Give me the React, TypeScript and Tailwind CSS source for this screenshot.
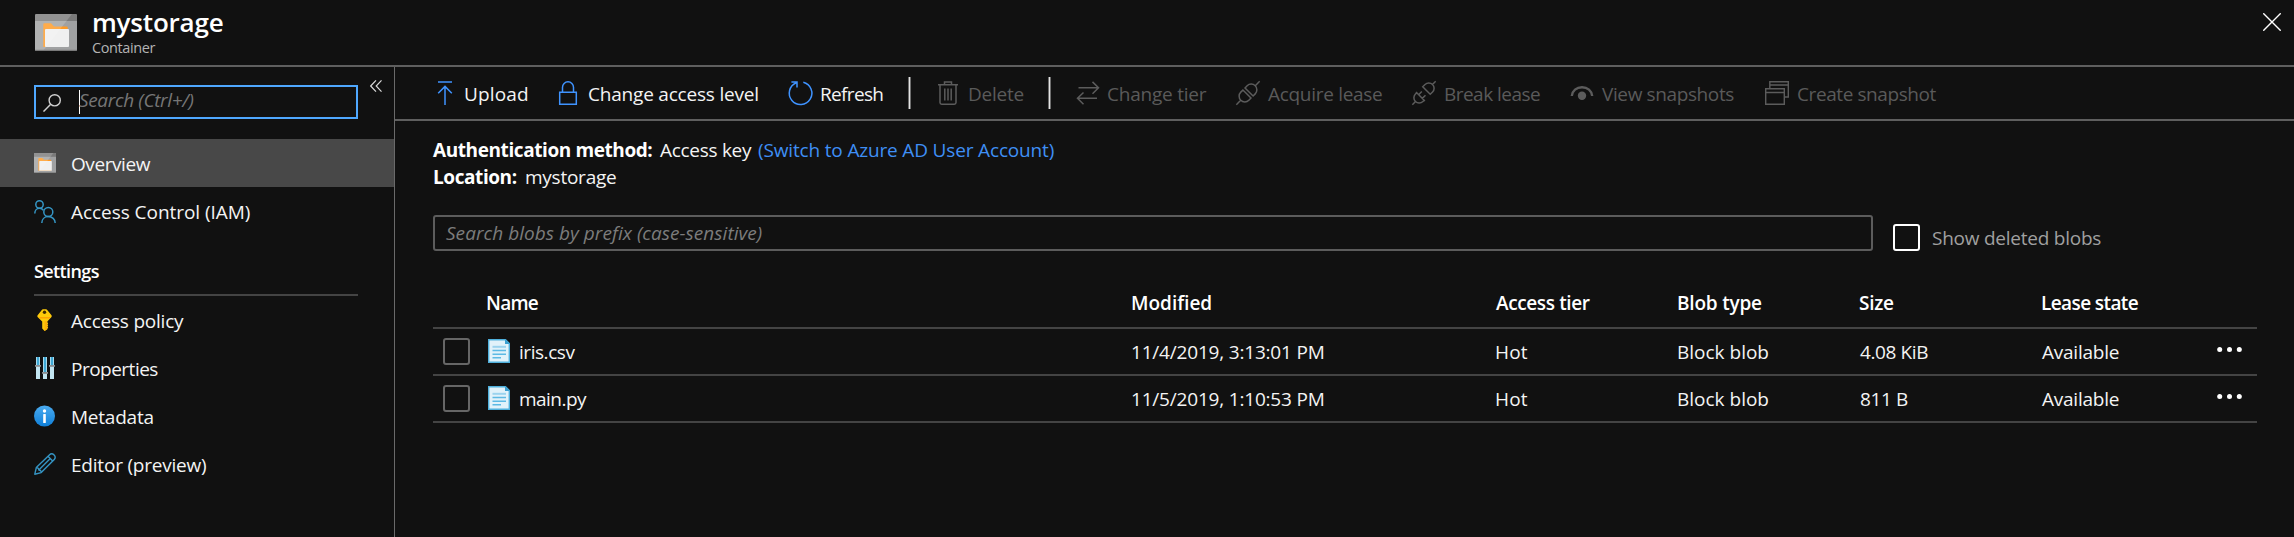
import React, { ReactNode } from 'react';

function ContainerIcon({ className, id }: { className: string; id: string }) {
  return (
    <svg className={className} viewBox="0 0 42 37" preserveAspectRatio="none">
      <defs>
        <clipPath id={id}>
          <rect width="42" height="37" rx="1.5" />
        </clipPath>
      </defs>
      <g clipPath={`url(#${id})`}>
        <rect width="42" height="37" fill="#a0a1a2" />
        <rect width="42" height="7" fill="#7a7a7a" />
        <path d="M8.3 33V10.5c0-.8.5-1.2 1.200-1.200H16l3 3.200H31.500c.8 0 1.200.4 1.200 1.200V33z" fill="#ff9a24" />
        <rect x="10" y="15" width="24" height="18" rx="1" fill="#f0f0f0" />
        <path d="M0 0H37L8 37H0z" fill="#fff" opacity=".18" />
        <rect x="0" y="35.800" width="42" height="1.200" fill="#7a7a7a" />
      </g>
    </svg>
  );
}

function PeopleIcon() {
  return (
    <svg className="h-[23px] w-[22px]" viewBox="0 0 22 23" fill="none" stroke="#3595c4" strokeWidth="1.500">
      <circle cx="5.500" cy="4.500" r="3.700" />
      <path d="M.8 13.500c0-3 2-5.200 4.700-5.200 1.700 0 3 .7 3.900 1.900" />
      <circle cx="14.300" cy="12" r="4.500" />
      <path d="M7.800 23c0-3.700 2.700-6.400 6.500-6.400s6.900 2.700 6.900 6.400" />
    </svg>
  );
}

function KeyIcon() {
  return (
    <svg className="h-[22px] w-[22px]" viewBox="0 0 22 22">
      <path
        d="M8.200.6C9 .1 12 .1 12.800.6l4.500 5.300c.6.700.600 1.600 0 2.300l-4 4.300v1.100l.9.900-.9 1 .9 1-.9 1 .9 1-.9 1v.8L10.600 22 8.200 19.600V12.500L3.800 8.200c-.6-.7-.6-1.600 0-2.300z"
        fill="#ffca0a"
      />
      <path d="M5.500 8.800h10.500" stroke="#ff9c00" strokeWidth="1.300" />
      <path d="M13.300 12.500v7.500L10.600 22V12z" fill="#fdb10a" />
      <circle cx="10.500" cy="3.300" r="1.700" fill="#3d2a00" />
    </svg>
  );
}

function PropertiesIcon() {
  return (
    <svg className="h-[22px] w-[22px]" viewBox="0 0 22 22">
      {[
        [2, 8],
        [9, 15],
        [16, 8],
      ].map(([x, h]) => (
        <g key={x}>
          <rect x={x} y="0" width="4" height="22" fill="#c3e6f2" />
          <rect x={x + 0.8} y="0" width="2.400" height={h} fill="#3fa9d6" />
          <rect x={x - 1} y={h} width="6" height="1.800" fill="#8a8d90" />
        </g>
      ))}
    </svg>
  );
}

function InfoIcon() {
  return (
    <svg className="h-[22px] w-[22px]" viewBox="0 0 22 22">
      <defs>
        <linearGradient id="info" x1="0" y1="0" x2="0" y2="1">
          <stop offset="0" stopColor="#4aabf0" />
          <stop offset="1" stopColor="#0f7fd8" />
        </linearGradient>
      </defs>
      <circle cx="10.500" cy="11" r="10.500" fill="url(#info)" />
      <circle cx="10.500" cy="6" r="1.700" fill="#fff" />
      <rect x="9.200" y="9" width="2.600" height="9" rx=".6" fill="#fff" />
    </svg>
  );
}

function PencilIcon() {
  return (
    <svg className="h-[22px] w-[22px]" viewBox="0 0 22 22" fill="none" stroke="#3595c4" strokeWidth="1.400" strokeLinejoin="round">
      <path d="M.8 21.200l1.500-6.600L15.600 1.700c1.200-1.200 3-1.200 4.200 0l.5.500c1.200 1.200 1.200 3 0 4.200L7.200 19.600z" />
      <path d="M2.300 14.600c1.600-.1 2.500.8 2.500 2.400 1.600 0 2.500 1 2.400 2.600M14 3.300l4.700 4.700M4.800 17L16.300 5.600" />
    </svg>
  );
}

const I = 'h-6 w-6 shrink-0 overflow-visible';

const icons: Record<string, ReactNode> = {
  upload: (
    <svg className={I} viewBox="0 0 24 24" fill="none" stroke="#3f93ff" strokeWidth="1.500">
      <path d="M5 .9h14M12 24V5.500M5.200 12.300L12 5.400l6.800 6.900" />
    </svg>
  ),
  lock: (
    <svg className={I} viewBox="0 0 24 24" fill="none" stroke="#3f93ff" strokeWidth="1.500">
      <path d="M3.700 11.200h16.600v12H3.700zM6.500 11V6.300a5.500 5.500 0 0 1 11 0V11" />
    </svg>
  ),
  refresh: (
    <svg className={I} viewBox="0 0 24 24" fill="none" stroke="#3f93ff" strokeWidth="1.500">
      <path d="M15.300 1.200A11.300 11.300 0 1 1 8.300 1.700M3.400.9H9v5.500" />
    </svg>
  ),
  trash: (
    <svg className={I} viewBox="0 0 24 24" fill="none" stroke="#5c5c5c" strokeWidth="1.500">
      <path d="M2 3.800h20M8.500 3.500V.9h7v2.600M4 4v17.500c0 1 .7 1.700 1.700 1.700h12.600c1 0 1.700-.7 1.700-1.700V4M8.800 7.500v12M12 7.500v12M15.200 7.500v12" />
    </svg>
  ),
  swap: (
    <svg className={I} viewBox="0 0 24 24" fill="none" stroke="#5c5c5c" strokeWidth="1.500">
      <path d="M2.500 6.800h20M16.500.9l6 5.900-6 5.900M21 17.300H1.500M7.500 11.500l-6 5.800 6 5.900" />
    </svg>
  ),
  plug: (
    <svg className={I} viewBox="0 0 24 24" fill="none" stroke="#5c5c5c" strokeWidth="1.500">
      <g transform="translate(12 12) rotate(-45)">
        <path d="M-16.500 0h6.500M10 0h6.500M-1.500-5.700h-3a5.700 5.700 0 0 0 0 11.400h3zM1.500-5.700h3a5.700 5.700 0 0 1 0 11.400h-3z" />
      </g>
    </svg>
  ),
  unplug: (
    <svg className={I} viewBox="0 0 24 24" fill="none" stroke="#5c5c5c" strokeWidth="1.500">
      <g transform="translate(12 12) rotate(-45)">
        <path d="M-16.500 0h4.500M12 0h4.500M-5-5.300h-1.800a5.300 5.300 0 0 0 0 10.600H-5M-5-6.300V6.300M-5-2.600h4.500M-5 2.600h4.500M3.500-5.300h3.300a5.300 5.300 0 0 1 0 10.600H3.500z" />
      </g>
    </svg>
  ),
  eye: (
    <svg className={I} viewBox="0 0 24 24" fill="none">
      <path d="M1.800 15C2.300 9.800 6.500 6.300 12 6.300s9.700 3.500 10.200 8.700" stroke="#5c5c5c" strokeWidth="2.400" />
      <circle cx="12" cy="14.800" r="4.200" fill="#5c5c5c" />
    </svg>
  ),
  windows: (
    <svg className={I} viewBox="0 0 24 24" fill="none" stroke="#5c5c5c" strokeWidth="1.400">
      <path d="M.7 7.700h18.600v15.600H.7zM.7 11.500h18.600M4.800 7V.7h18.500V16h-4M4.800 4h18.500" />
    </svg>
  ),
};

const commands = [
  { icon: 'upload', label: 'Upload', box: 'w-[123px]', text: 'ml-[7px] tracking-[0.15px]' },
  { icon: 'lock', label: 'Change access level', box: 'w-[232px]', text: 'ml-[8px] tracking-[-0.2px]' },
  { icon: 'refresh', label: 'Refresh', box: 'w-[120px]', text: 'ml-[8px] tracking-[-0.66px]' },
  { icon: '' },
  { icon: 'trash', label: 'Delete', box: 'w-[112px]', text: 'ml-[8px] tracking-[-0.26px]' },
  { icon: '' },
  { icon: 'swap', label: 'Change tier', box: 'w-[160px]', text: 'ml-[7px] tracking-[-0.22px]' },
  { icon: 'plug', label: 'Acquire lease', box: 'w-[176px]', text: 'ml-[8px] tracking-[-0.3px]' },
  { icon: 'unplug', label: 'Break lease', box: 'w-[158px]', text: 'ml-[8px] tracking-[-0.53px]' },
  { icon: 'eye', label: 'View snapshots', box: 'w-[195px]', text: 'ml-[8px] tracking-[-0.38px]' },
  { icon: 'windows', label: 'Create snapshot', box: 'w-[180px]', text: 'ml-[8px] tracking-[-0.41px]' },
];

function NavItem({ icon, label, tracking, active }: { icon: ReactNode; label: string; tracking: string; active?: boolean }) {
  return (
    <div className={`flex h-12 items-center pl-[34px] ${active ? 'bg-[#484848]' : ''}`}>
      <span className="w-[22px] shrink-0">{icon}</span>
      <span className={`ml-[15px] pt-[2px] leading-[26px] ${tracking}`}>{label}</span>
    </div>
  );
}

function FileIcon() {
  return (
    <svg className="h-6 w-[22px] shrink-0" viewBox="0 0 22 24">
      <path d="M.7.700H17.500L21.300 4.500V23.300H.7z" fill="#e1f2fa" stroke="#4fb0dc" strokeWidth="1.400" />
      <path d="M17 0l5 5h-5z" fill="#3b9fd0" />
      <path d="M4.500 7.800h13.500" stroke="#9bd3ee" strokeWidth="2" />
      <path d="M4.500 11.500h13.500M4.500 15.300h13.500M4.500 18.700h8.500" stroke="#5cb9e4" strokeWidth="1.400" />
    </svg>
  );
}

const COLS = 'grid grid-cols-[698px_364px_182px_182px_182px_216px] leading-[26px]';

const files = [
  { name: 'iris.csv', nameCls: 'tracking-[-0.45px]', modified: '11/4/2019, 3:13:01 PM', size: '4.08 KiB' },
  { name: 'main.py', nameCls: 'tracking-[-0.54px]', modified: '11/5/2019, 1:10:53 PM', size: '811 B' },
];

export default function App() {
  return (
    <div className="flex h-[537px] w-[2294px] flex-col overflow-hidden bg-[#111111] font-['Open_Sans','Noto_Sans',sans-serif] text-[19px] whitespace-nowrap text-[#f4f4f4]">
      <header className="flex h-[67px] shrink-0 justify-between border-b-2 border-[#5f5f5f] pl-[35px]">
        <div className="flex">
          <ContainerIcon id="hdr" className="mt-[14px] h-[37px] w-[42px]" />
          <div className="ml-[15px] pt-[4px]">
            <h1 className="text-[26px] leading-[36px] font-semibold tracking-[-0.19px] text-white">mystorage</h1>
            <p className="mt-[-2px] text-[14.500px] leading-[20px] tracking-[-0.4px] text-[#b4b4b4]">Container</p>
          </div>
        </div>
        <svg className="mt-[13px] mr-[13px] h-[18px] w-[18px]" viewBox="0 0 18 18" stroke="#fff" strokeWidth="1.400">
          <path d="M.3.3l17.400 17.400M17.700.3L.3 17.700" />
        </svg>
      </header>

      <div className="flex min-h-0 flex-1">
        <aside className="w-[395px] shrink-0 border-r border-[#6a6a6a]">
          <div className="flex pt-[18px] pl-[34px]">
            <div className="flex h-[34px] w-[324px] items-center border-2 border-[#4fa8ff] pl-[7px]">
              <svg className="mt-[2px] h-[18px] w-[18px]" viewBox="0 0 18 18" fill="none" stroke="#d0d0d0" strokeWidth="1.400">
                <circle cx="11.700" cy="6.300" r="5.600" />
                <path d="M7.700 10.300L.5 17.600" />
              </svg>
              <span className="ml-[18px] h-6 w-px bg-white" />
              <span className="-ml-px pb-[4px] leading-[26px] tracking-[-0.35px] text-[#767676] italic">Search (Ctrl+/)</span>
            </div>
            <svg className="mt-[-5px] ml-[12px] h-[12px] w-[12px]" viewBox="0 0 12 12" fill="none" stroke="#d8d8d8" strokeWidth="1.200">
              <path d="M6 .4L.7 6 6 11.600M11.500.4L6.200 6l5.300 5.600" />
            </svg>
          </div>
          <nav className="mt-[20px]">
            <NavItem active icon={<ContainerIcon id="nav" className="h-[20px] w-[22px]" />} label="Overview" tracking="tracking-[-0.42px]" />
            <NavItem icon={<PeopleIcon />} label="Access Control (IAM)" tracking="tracking-[-0.05px]" />
            <h2 className="mx-[34px] mr-[36px] h-[61px] border-b-2 border-[#444444] pt-[24px] text-[18px] leading-[24px] font-semibold tracking-[-0.6px] text-white">
              Settings
            </h2>
            <NavItem icon={<KeyIcon />} label="Access policy" tracking="tracking-[-0.22px]" />
            <NavItem icon={<PropertiesIcon />} label="Properties" tracking="tracking-[-0.51px]" />
            <NavItem icon={<InfoIcon />} label="Metadata" tracking="tracking-[-0.22px]" />
            <NavItem icon={<PencilIcon />} label="Editor (preview)" tracking="tracking-[-0.21px]" />
          </nav>
        </aside>

        <main className="min-w-0 flex-1">
          <div className="flex h-[54px] items-center border-b-2 border-[#5f5f5f] pl-[38px]">
            {commands.map((c, i) =>
              c.icon ? (
                <div key={i} className={`flex shrink-0 items-center ${c.box} ${i < 3 ? '' : 'text-[#5a5a5a]'}`}>
                  {icons[c.icon]}
                  <span className={`pt-[2px] leading-[26px] ${c.text}`}>{c.label}</span>
                </div>
              ) : (
                <span key={i} className="mr-[25px] h-8 w-[3px] shrink-0 border-x border-[#6f6f6f] bg-[#e4e4e4]" />
              ),
            )}
          </div>

          <div className="w-[1862px] pl-[38px]">
            <div className="pt-[16px] leading-[27px]">
              <div className="flex">
                <b className="w-[227px] tracking-[-0.41px] text-white">Authentication method:</b>
                <span className="w-[98px] tracking-[-0.29px]">Access key</span>
                <a className="tracking-[-0.16px] text-[#3f8ff5]">(Switch to Azure AD User Account)</a>
              </div>
              <div className="flex">
                <b className="w-[92px] tracking-[-0.42px] text-white">Location:</b>
                <span className="tracking-[-0.25px]">mystorage</span>
              </div>
            </div>

            <div className="mt-[24px] flex">
              <div className="flex h-[36px] w-[1440px] items-center rounded-[3px] border-2 border-[#5c5c5c] pl-[11px] leading-[26px] tracking-[0.05px] text-[#7c7c7c] italic">
                Search blobs by prefix (case-sensitive)
              </div>
              <span className="mt-[9px] ml-[20px] h-[27px] w-[27px] rounded-[3px] border-2 border-white" />
              <span className="mt-[10px] ml-[12px] leading-[26px] tracking-[-0.24px] text-[#a0a0a0]">Show deleted blobs</span>
            </div>

            <div className="mt-[39px]">
              <div className={`${COLS} h-[39px] border-b-2 border-[#444444] font-semibold text-white`}>
                <span className="pl-[53px] tracking-[-0.74px]">Name</span>
                <span>Modified</span>
                <span className="pl-px tracking-[-0.38px]">Access tier</span>
                <span className="tracking-[-0.2px]">Blob type</span>
                <span className="tracking-[-0.28px]">Size</span>
                <span className="tracking-[-0.6px]">Lease state</span>
              </div>
              {files.map((f) => (
                <div key={f.name} className={`${COLS} h-[47px] border-b-2 border-[#444444] pt-[10px]`}>
                  <div className="flex">
                    <span className="mt-[-1px] ml-[10px] h-[27px] w-[27px] rounded-[3px] border-2 border-[#666666]" />
                    <span className="ml-[18px] flex">
                      <FileIcon />
                    </span>
                    <span className={`ml-[9px] ${f.nameCls}`}>{f.name}</span>
                  </div>
                  <span className="tracking-[-0.19px]">{f.modified}</span>
                  <span className="tracking-[0.15px]">Hot</span>
                  <span>Block blob</span>
                  <span className="pl-px tracking-[-0.4px]">{f.size}</span>
                  <span className="flex">
                    <span className="w-[176px] pl-px tracking-[-0.24px]">Available</span>
                    <svg className="mt-[8px] h-[5px] w-[25px]" viewBox="0 0 25 5" fill="#fff">
                      <circle cx="2.700" cy="2.500" r="2.500" />
                      <circle cx="12.500" cy="2.500" r="2.500" />
                      <circle cx="22.300" cy="2.500" r="2.500" />
                    </svg>
                  </span>
                </div>
              ))}
            </div>
          </div>
        </main>
      </div>
    </div>
  );
}
